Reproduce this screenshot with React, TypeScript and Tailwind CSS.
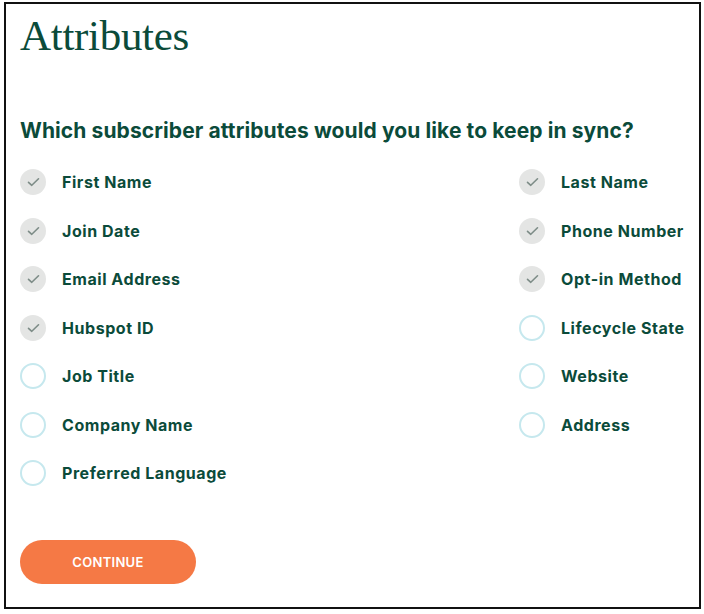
const left = [
  { label: "First Name", checked: true },
  { label: "Join Date", checked: true },
  { label: "Email Address", checked: true },
  { label: "Hubspot ID", checked: true },
  { label: "Job Title", checked: false },
  { label: "Company Name", checked: false },
  { label: "Preferred Language", checked: false },
];

const right = [
  { label: "Last Name", checked: true },
  { label: "Phone Number", checked: true },
  { label: "Opt-in Method", checked: true },
  { label: "Lifecycle State", checked: false },
  { label: "Website", checked: false },
  { label: "Address", checked: false },
];

function Option({ label, checked }: { label: string; checked: boolean }) {
  return (
    <div className="flex items-center h-[48.5px]">
      {checked ? (
        <span className="flex items-center justify-center w-[26px] h-[26px] rounded-full bg-[#e4e5e4]">
          <svg width="13" height="10" viewBox="0 0 13 10" fill="none">
            <path d="M1.5 5.3 L4.8 8.3 L11.5 1.8" stroke="#7d8c87" strokeWidth="1.6" strokeLinecap="round" strokeLinejoin="round" />
          </svg>
        </span>
      ) : (
        <span className="w-[26px] h-[26px] rounded-full border-2 border-[#c6e8ee] bg-white" />
      )}
      <span className="ml-[16px] text-[16px] font-bold text-[#0b4b3a] tracking-[0.55px]">{label}</span>
    </div>
  );
}

export default function App() {
  return (
    <div className="pt-[2px] pl-[4px] bg-white" style={{ fontFamily: "Inter, 'Noto Sans', sans-serif" }}>
      <div className="w-[697px] h-[607px] border-2 border-[#111] pl-[14px] pt-[8px] bg-white">
        <h1
          className="text-[43px] leading-[48px] text-[#0b4b3a] tracking-[-0.3px]"
          style={{ fontFamily: "'Liberation Serif', 'DejaVu Serif', serif" }}
        >
          Attributes
        </h1>
        <h2 className="mt-[58px] text-[21px] leading-[26px] font-bold text-[#0b4b3a] tracking-[0.1px]">
          Which subscriber attributes would you like to keep in sync?
        </h2>
        <div className="mt-[14px] grid grid-cols-[499px_1fr]">
          <div className="flex flex-col">
            {left.map((o) => (
              <Option key={o.label} {...o} />
            ))}
          </div>
          <div className="flex flex-col">
            {right.map((o) => (
              <Option key={o.label} {...o} />
            ))}
          </div>
        </div>
        <button className="mt-[42px] w-[176px] h-[44px] pt-[2px] rounded-full bg-[#f57945] text-white text-[13px] font-semibold tracking-[0.3px]">
          CONTINUE
        </button>
      </div>
    </div>
  );
}
